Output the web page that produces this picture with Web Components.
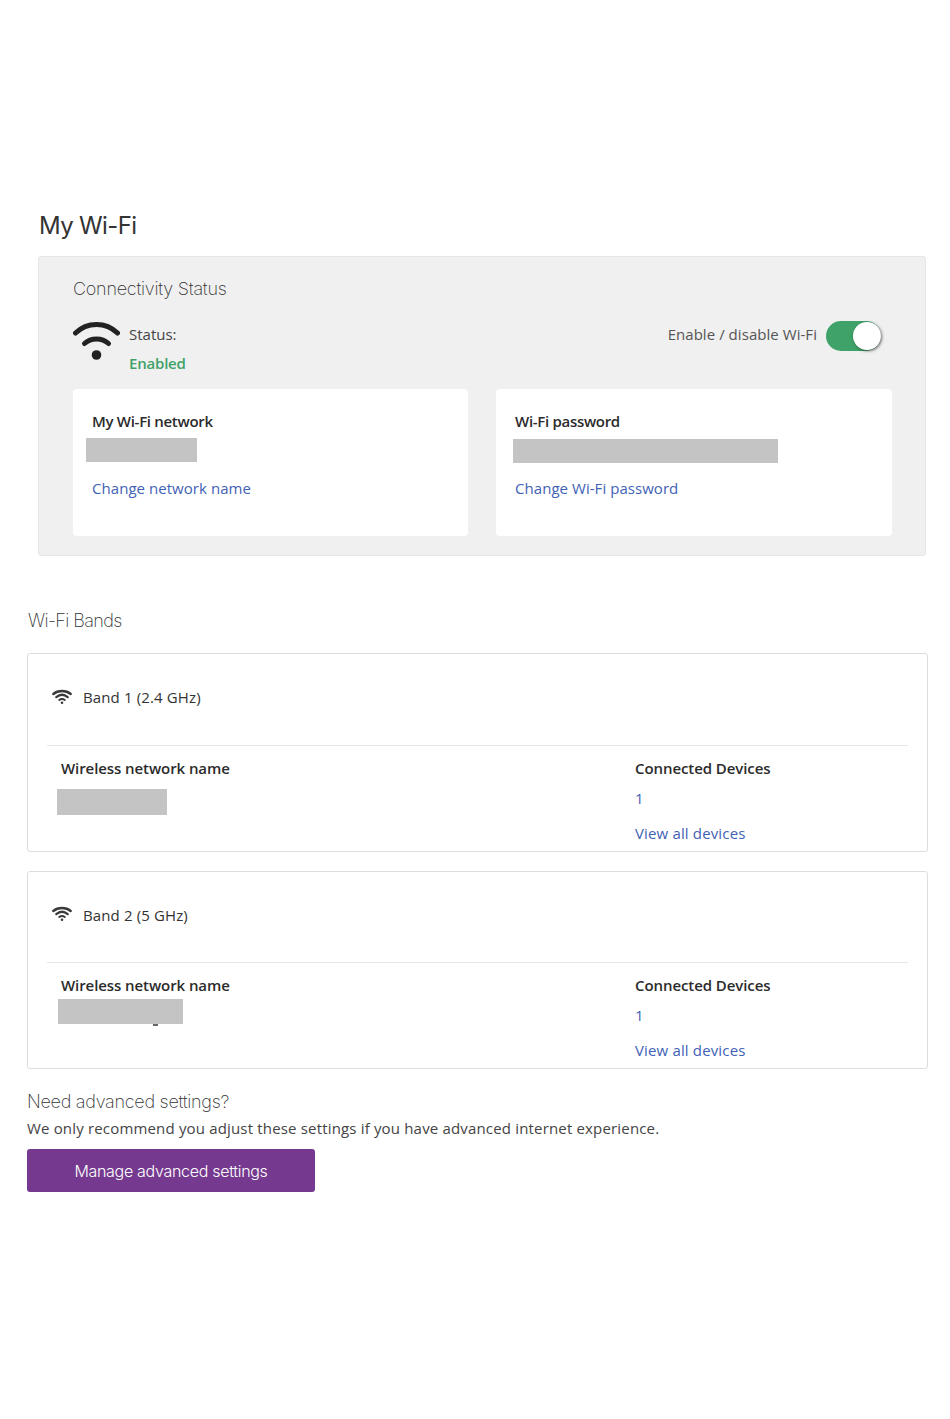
<!DOCTYPE html>
<html lang="en">
<head>
<meta charset="utf-8">
<title>My Wi-Fi</title>
<style>
html,body{ margin:0; padding:0; background:#fff; }
body{ font-family:"Open Sans","Liberation Sans",sans-serif; color:#333; width:950px; height:1419px; overflow:hidden; }
</style>
</head>
<body>
<wifi-page>
    <status-panel slot="panel">
        <info-card title="My Wi-Fi network" link="Change network name" block-width="111" block-left="-6" block-top="6"></info-card>
        <info-card title="Wi-Fi password" link="Change Wi-Fi password" block-width="265" block-left="-2" block-top="7"></info-card>
    </status-panel>
    <band-card slot="bands" name="Band 1 (2.4 GHz)" card-height="199" head-height="91" block-width="110" block-left="-4" block-top="10" block-height="26"></band-card>
    <band-card slot="bands" name="Band 2 (5 GHz)" card-height="198" head-height="90" block-width="125" block-left="-3" block-top="3" block-height="25" descender></band-card>
</wifi-page>

<script>
const WIFI_SMALL = `<svg viewBox="0 0 20 16" width="20" height="16" fill="none" stroke="#3a3a3a" stroke-linecap="round">
    <path d="M1.300 5C6 1 14 1 18.700 5" stroke-width="2.300"/>
    <path d="M4.300 8.200C7.800 5.200 12.200 5.200 15.700 8.200" stroke-width="2.200"/>
    <path d="M7.200 11C8.900 9.700 11.100 9.700 12.800 11" stroke-width="2"/>
    <circle cx="10" cy="13.700" r="1.300" fill="#3a3a3a" stroke="none"/>
</svg>`;

class ToggleSwitch extends HTMLElement {
    constructor() {
        super();
        this.attachShadow({ mode: 'open' }).innerHTML = `
        <style>
        :host{ display:block; position:relative; width:56px; height:30px; }
        #track{ position:absolute; left:0; top:0; width:55px; height:30px; border-radius:15px; background:#3fa268; }
        #knob{ position:absolute; left:27px; top:1px; width:28px; height:28px; border-radius:50%; background:#fff; box-shadow:1px 1px 3px rgba(0,0,0,.55); }
        </style>
        <div id="track"></div><div id="knob"></div>`;
    }
}

class RedactBlock extends HTMLElement {
    constructor() {
        super();
        this.attachShadow({ mode: 'open' }).innerHTML = `
        <style>
        :host{ display:block; position:relative; background:#c4c4c4; }
        :host([descender])::after{ content:''; position:absolute; left:95px; bottom:-2px; width:5px; height:2px; background:#666; }
        </style>`;
    }
}

class InfoCard extends HTMLElement {
    constructor() {
        super();
        const shadowRoot = this.attachShadow({ mode: 'open' });
        const left = this.getAttribute('block-left');
        const top = +this.getAttribute('block-top');
        shadowRoot.innerHTML = `
        <style>
        :host{ display:block; box-sizing:border-box; height:147px; background:#fff; border-radius:4px; padding:22px 19px 0; }
        h3{ margin:0; font-size:15px; line-height:21px; font-weight:600; color:#2b2b2b; letter-spacing:-.3px; }
        redact-block{ width:${this.getAttribute('block-width')}px; height:24px; margin:${top}px 0 0 ${left}px; }
        a{ display:block; margin-top:${22 - top}px; font-size:15px; line-height:21px; color:#3f62b5; text-decoration:none; letter-spacing:.05px; }
        </style>
        <h3>${this.getAttribute('title')}</h3>
        <redact-block></redact-block>
        <a href="#">${this.getAttribute('link')}</a>`;
    }
}

class StatusPanel extends HTMLElement {
    constructor() {
        super();
        this.attachShadow({ mode: 'open' }).innerHTML = `
        <style>
        :host{ display:block; box-sizing:border-box; width:888px; height:300px; margin-left:38px; padding:21px 33px 0 34px; background:#f0f0f0; border:1px solid #e6e6e6; border-radius:3px; }
        h2{ margin:0; font:200 18px/22px Inter,"Liberation Sans",sans-serif; letter-spacing:-.25px; color:#333; }
        #row{ display:flex; justify-content:space-between; height:69px; margin-top:18px; }
        #state{ display:flex; }
        svg{ display:block; margin-top:3px; }
        #text{ margin-left:9px; font-size:15px; line-height:21px; color:#444; padding-top:6px; }
        #text b{ display:block; margin-top:8px; color:#3fa268; font-weight:600; letter-spacing:-.2px; }
        #enable{ display:flex; align-items:flex-start; margin-right:10px; }
        #enable span{ font-size:15px; line-height:21px; color:#555; margin-right:9px; padding-top:6px; letter-spacing:.05px; }
        toggle-switch{ margin-top:3px; }
        #cards{ display:grid; grid-template-columns:395px 396px; column-gap:28px; margin-top:2px; }
        </style>
        <h2>Connectivity Status</h2>
        <div id="row">
            <div id="state">
                <svg viewBox="0 0 47 42" width="47" height="42" fill="none" stroke="#222" stroke-linecap="round">
                    <path d="M2.500 12C14 .5 33 .5 44.500 12" stroke-width="5"/>
                    <path d="M11.500 22.500C18 16.500 29 16.500 35.500 22.500" stroke-width="5"/>
                    <circle cx="23.500" cy="34" r="4.800" fill="#222" stroke="none"/>
                </svg>
                <div id="text">Status:<b>Enabled</b></div>
            </div>
            <div id="enable"><span>Enable / disable Wi-Fi</span><toggle-switch></toggle-switch></div>
        </div>
        <div id="cards"><slot></slot></div>`;
    }
}

class BandCard extends HTMLElement {
    constructor() {
        super();
        const shadowRoot = this.attachShadow({ mode: 'open' });
        const top = +this.getAttribute('block-top');
        const height = +this.getAttribute('block-height');
        shadowRoot.innerHTML = `
        <style>
        :host{ display:block; box-sizing:border-box; width:901px; height:${this.getAttribute('card-height')}px; background:#fff; border:1px solid #ddd; border-radius:3px; padding:0 19px; overflow:hidden; }
        #head{ display:flex; align-items:center; height:${this.getAttribute('head-height') - 5}px; padding:0 0 5px 5px; border-bottom:1px solid #e6e6e6; }
        #head svg{ margin-top:-1px; }
        #head span{ margin-left:11px; font-size:15px; color:#333; letter-spacing:.13px; font-weight:500; }
        #body{ display:grid; grid-template-columns:574px 1fr; padding:12px 0 0 14px; }
        h4{ margin:0; font-size:15px; line-height:21px; font-weight:600; color:#2b2b2b; letter-spacing:-.08px; }
        redact-block{ width:${this.getAttribute('block-width')}px; height:${height}px; margin:${top}px 0 0 ${this.getAttribute('block-left')}px; }
        a{ display:block; font-size:15px; line-height:21px; color:#3f62b5; text-decoration:none; letter-spacing:.15px; }
        #count{ margin-top:9px; }
        #all{ margin-top:14px; }
        </style>
        <div id="head">${WIFI_SMALL}<span>${this.getAttribute('name')}</span></div>
        <div id="body">
            <div><h4>Wireless network name</h4><redact-block ${this.hasAttribute('descender') ? 'descender' : ''}></redact-block></div>
            <div><h4>Connected Devices</h4><a id="count" href="#">1</a><a id="all" href="#">View all devices</a></div>
        </div>`;
    }
}

class WifiPage extends HTMLElement {
    constructor() {
        super();
        this.attachShadow({ mode: 'open' }).innerHTML = `
        <style>
        :host{ display:block; padding-top:210px; }
        h1{ margin:0 0 29px 39px; font:400 24px/32px Inter,"Liberation Sans",sans-serif; letter-spacing:-.65px; color:#333; height:17px; }
        h2{ font:200 18px/22px Inter,"Liberation Sans",sans-serif; letter-spacing:-.6px; color:#333; margin:54px 0 21px 28px; }
        #bands{ display:flex; flex-direction:column; gap:19px; margin-left:27px; }
        #advanced{ margin-left:27px; padding-top:21px; }
        h3{ margin:0; font:200 18px/24px Inter,"Liberation Sans",sans-serif; letter-spacing:-.27px; color:#333; }
        p{ margin:4px 0 0; font-size:15px; line-height:21px; color:#444; letter-spacing:.17px; }
        button{ display:block; width:288px; height:43px; margin-top:10px; padding:1px 0 0; border:0; border-radius:3px; background:#753a8f; color:#fff; font:300 16px/22px Inter,"Liberation Sans",sans-serif; letter-spacing:-.3px; }
        </style>
        <h1>My Wi-Fi</h1>
        <slot name="panel"></slot>
        <h2>Wi-Fi Bands</h2>
        <div id="bands"><slot name="bands"></slot></div>
        <div id="advanced">
            <h3>Need advanced settings?</h3>
            <p>We only recommend you adjust these settings if you have advanced internet experience.</p>
            <button>Manage advanced settings</button>
        </div>`;
    }
}

customElements.define('toggle-switch', ToggleSwitch);
customElements.define('redact-block', RedactBlock);
customElements.define('info-card', InfoCard);
customElements.define('status-panel', StatusPanel);
customElements.define('band-card', BandCard);
customElements.define('wifi-page', WifiPage);
</script>
</body>
</html>
